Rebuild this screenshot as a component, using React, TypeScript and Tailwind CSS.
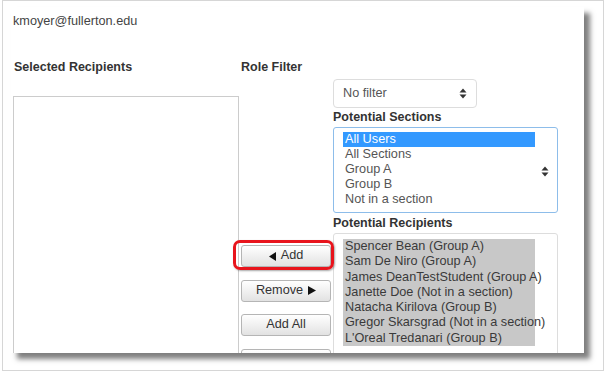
import React from "react";

const font = { fontFamily: '"Liberation Sans", Arial, sans-serif' };

function UpDown() {
  return (
    <svg width="8" height="11" viewBox="0 0 8 11" className="block">
      <path d="M4 0.5 L7.5 4.5 L0.5 4.5 Z" fill="#333" />
      <path d="M4 10.5 L7.5 6.5 L0.5 6.5 Z" fill="#333" />
    </svg>
  );
}

function TriLeft() {
  return (
    <svg width="7" height="9" viewBox="0 0 7 9" className="inline-block">
      <path d="M0 4.5 L7 0 L7 9 Z" fill="#111" />
    </svg>
  );
}

function TriRight() {
  return (
    <svg width="8" height="9" viewBox="0 0 8 9" className="inline-block">
      <path d="M8 4.5 L0 0 L0 9 Z" fill="#111" />
    </svg>
  );
}

function Btn({ children }: { children?: React.ReactNode }) {
  return (
    <div className="h-[22px] w-[90px] flex items-center justify-center gap-[5px] border border-[#b5b5b5] rounded-[3px] bg-gradient-to-b from-[#ffffff] to-[#e2e2e2] text-[12.7px] text-[#333]">
      {children}
    </div>
  );
}

const sections = ["All Users", "All Sections", "Group A", "Group B", "Not in a section"];
const recipients = [
  "Spencer Bean (Group A)",
  "Sam De Niro (Group A)",
  "James DeanTestStudent (Group A)",
  "Janette Doe (Not in a section)",
  "Natacha Kirilova (Group B)",
  "Gregor Skarsgrad (Not in a section)",
  "L'Oreal Tredanari (Group B)",
];

export default function App() {
  return (
    <div className="relative w-[604px] h-[373px] bg-white overflow-hidden" style={font}>
      <div className="ml-[2px] w-[602px] h-[371px] border border-[#d6d6d6] bg-white">
        <div className="ml-[8px] mt-[6px] w-[573px] h-[346px] bg-white overflow-hidden shadow-[6px_6px_5px_rgba(0,0,0,0.5)]">
          <div className="pl-[2px] pt-[7px] text-[12.7px] leading-[15px] text-[#444]">kmoyer@fullerton.edu</div>
          <div className="flex pl-[2px] mt-[31px]">
            {/* Left column */}
            <div className="w-[226px] flex flex-col">
              <div className="text-[12.5px] leading-[15px] font-bold text-[#333] pl-[1px]">Selected Recipients</div>
              <div className="mt-[21px] h-[300px] border border-[#cccccc]" />
            </div>
            {/* Middle column */}
            <div className="ml-[2px] w-[90px] flex flex-col">
              <div className="text-[12.5px] leading-[15px] font-bold text-[#333]">Role Filter</div>
              <div className="mt-[170px] flex flex-col gap-[12.5px]">
                <Btn>
                  <TriLeft />
                  <span>Add</span>
                </Btn>
                <Btn>
                  <span>Remove</span>
                  <TriRight />
                </Btn>
                <Btn>
                  <span>Add All</span>
                </Btn>
                <Btn />
              </div>
            </div>
            {/* Right column */}
            <div className="ml-[2px] w-[225px] flex flex-col pt-[19px]">
              <div className="w-[144px] h-[29px] border border-[#dddddd] rounded-[4px] flex items-center justify-between pl-[9px] pr-[9px] text-[12.7px] text-[#555]">
                <span>No filter</span>
                <UpDown />
              </div>
              <div className="mt-[2px] text-[12.5px] leading-[15px] font-bold text-[#333]">Potential Sections</div>
              <div className="mt-[2px] h-[86px] border border-[#8dbdea] rounded-[3px] relative pt-[4px] pl-[9px]">
                <div className="w-[192px] flex flex-col text-[12.7px] leading-[15px] text-[#555]">
                  {sections.map((s, i) => (
                    <div key={s} className={i === 0 ? "bg-[#3399ff] text-white pl-[2px]" : "pl-[2px]"}>
                      {s}
                    </div>
                  ))}
                </div>
                <div className="absolute left-[207px] top-[38px]">
                  <UpDown />
                </div>
              </div>
              <div className="mt-[3px] text-[12.5px] leading-[15px] font-bold text-[#333]">Potential Recipients</div>
              <div className="mt-[2px] h-[140px] border border-[#dddddd] rounded-[3px] pt-[5px] pl-[9px]">
                <div className="w-[192px] bg-[#c8c8c8] flex flex-col text-[12.7px] leading-[15.3px] text-[#3a3a3a]">
                  {recipients.map((r) => (
                    <div key={r} className="pl-[2px] whitespace-nowrap">
                      {r}
                    </div>
                  ))}
                </div>
              </div>
            </div>
          </div>
        </div>
      </div>
      <div className="absolute left-[233px] top-[240px] w-[101px] h-[30px] border-[3px] border-[#e8141c] rounded-[7px] shadow-[1px_1px_2px_rgba(0,0,0,0.35)]" />
    </div>
  );
}
